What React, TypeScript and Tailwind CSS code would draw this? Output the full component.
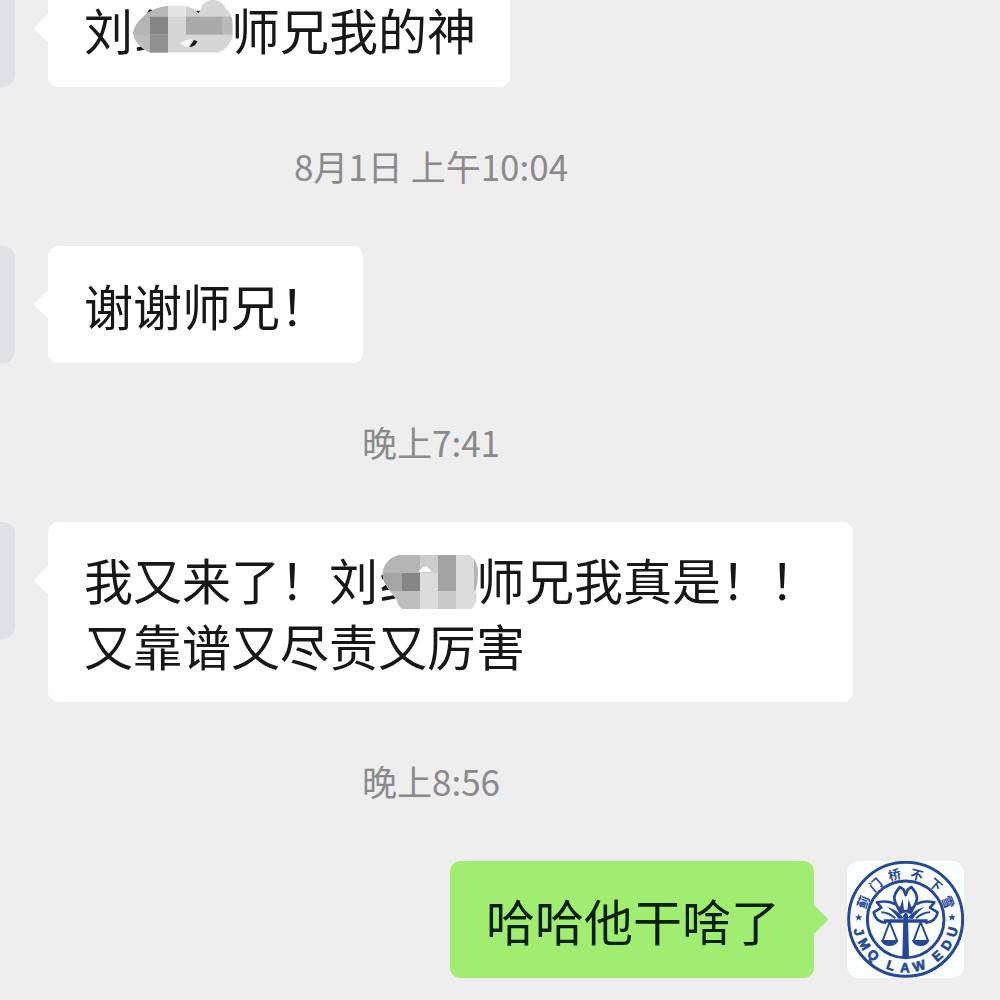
import React from "react";
import clsx from "clsx";

const ringTop = [
  { char: "蓟", angle: -68 },
  { char: "门", angle: -41 },
  { char: "桥", angle: -14 },
  { char: "不", angle: 14 },
  { char: "下", angle: 41 },
  { char: "雪", angle: 68 },
];

const ringBottom = [
  { char: "J", angle: 75 },
  { char: "M", angle: 59 },
  { char: "Q", angle: 42 },
  { char: "L", angle: 18 },
  { char: "A", angle: 1 },
  { char: "W", angle: -16 },
  { char: "E", angle: -41 },
  { char: "D", angle: -58 },
  { char: "U", angle: -75 },
];

const STAR = "M0 -11L3 -3L11 -3L5 2L7 10L0 5L-7 10L-5 2L-11 -3L-3 -3Z";

const LawLogo: React.FC = () => (
  <svg viewBox="51 36 351 351" className="size-full" role="img" aria-label="JMQ LAW EDU">
    <g fill="none" stroke="#27489a" strokeWidth="8" strokeLinejoin="round">
      <circle cx="227" cy="211" r="171" strokeWidth="9" />
      <circle cx="227" cy="211" r="115" strokeWidth="9" />
      {/* Blossom */}
      <path d="M213 192C204 176 192 162 193 144C195 132 203 122 210 114L221 122L227 138L233 122L244 114C251 122 259 132 261 144C262 162 250 176 241 192" />
      <path d="M196 166C180 156 160 156 141 160L154 176L131 190C134 208 146 219 168 222" />
      <path d="M258 166C274 156 294 156 313 160L300 176L323 190C320 208 308 219 286 222" />
      <path d="M154 190C168 190 182 196 196 208M300 190C286 190 272 196 258 208" strokeWidth="6" />
    </g>
    <g fill="#27489a">
      <path d="M194 164L210 174L218 150L222 182H232L236 150L244 174L260 164L244 196L227 190L210 196Z" />
      <path d="M170 174Q200 180 222 208L206 210Q192 188 170 174Z" />
      <path d="M284 174Q254 180 232 208L248 210Q262 188 284 174Z" />
    </g>
    {/* Scales */}
    <g fill="none" stroke="#27489a" strokeLinejoin="round">
      <path d="M162 216H293" strokeWidth="10" />
      <path d="M179 219L158 275M179 219L201 275M272 219L251 275M272 219L294 275" strokeWidth="6" />
    </g>
    <g fill="#27489a">
      <path d="M220 206Q217 199 227 190Q237 199 234 206L237 324H217Z" />
      <path d="M152 273H206Q199 291 179 291Q159 291 152 273Z" />
      <path d="M245 273H299Q292 291 272 291Q252 291 245 273Z" />
      <path d={STAR} transform="translate(86 205)" />
      <path d={STAR} transform="translate(366 205)" />
      <g textAnchor="middle" className="font-['Noto_Sans_CJK_SC',sans-serif] text-[38px] font-bold">
        {ringTop.map(({ char, angle }) => (
          <text key={char} x="227" y="88" transform={`rotate(${angle} 227 211)`}>
            {char}
          </text>
        ))}
      </g>
      <g
        textAnchor="middle"
        stroke="#27489a"
        strokeWidth="2"
        className="font-['Liberation_Sans_Narrow','Liberation_Sans',sans-serif] text-[40px] font-bold"
      >
        {ringBottom.map(({ char, angle }) => (
          <text key={char} x="227" y="370" transform={`rotate(${angle} 227 211)`}>
            {char}
          </text>
        ))}
      </g>
    </g>
  </svg>
);

// Pixelated smudges that hide part of a name
const SmudgeA: React.FC = () => (
  <svg viewBox="39 -14 294 198" className="absolute inset-0 size-full overflow-visible" aria-hidden="true">
    <clipPath id="smudge-a">
      <path d="M39 98Q42 72 68 50Q98 18 150 15H190Q218 20 240 38Q238 8 275 -4Q308 0 318 25Q338 38 338 75V110Q325 145 295 156H90Q45 135 39 98Z" />
    </clipPath>
    <g clipPath="url(#smudge-a)">
      <rect x="36" y="-10" width="310" height="170" fill="#d6d6d6" />
      <rect x="36" y="10" width="54" height="150" fill="#b4b4b4" />
      <rect x="36" y="102" width="54" height="60" fill="#bdbdbd" />
      <rect x="90" y="10" width="54" height="38" fill="#b8b8b8" />
      <rect x="90" y="48" width="54" height="54" fill="#858585" />
      <rect x="90" y="102" width="54" height="60" fill="#919191" />
      <rect x="144" y="10" width="54" height="38" fill="#e4e4e4" />
      <rect x="198" y="10" width="40" height="38" fill="#cdcdcd" />
      <rect x="198" y="48" width="108" height="54" fill="#aaaaaa" />
      <rect x="306" y="48" width="40" height="54" fill="#b9b9b9" />
    </g>
    <path d="M181 127Q198 115 216 117L207 139Q188 136 181 127Z" fill="#fff" />
    <path d="M222 118L232 122Q225 140 208 139Z" fill="#171717" />
    <path d="M228 31L241 30L236 37Z" fill="#171717" />
  </svg>
);

const SmudgeB: React.FC = () => (
  <svg viewBox="24 21 294 198" className="absolute inset-0 size-full overflow-visible" aria-hidden="true">
    <clipPath id="smudge-b">
      <path d="M85 48H300Q324 68 324 102Q324 130 317 156Q324 178 314 198L306 210H98Q84 202 80 182L52 145Q36 125 38 98Q46 60 85 48Z" />
    </clipPath>
    <g clipPath="url(#smudge-b)">
      <rect x="36" y="45" width="290" height="170" fill="#dcdcdc" />
      <rect x="36" y="45" width="114" height="57" fill="#b5b5b5" />
      <rect x="36" y="102" width="60" height="54" fill="#a5a5a5" />
      <rect x="96" y="102" width="54" height="54" fill="#858585" />
      <rect x="36" y="156" width="114" height="57" fill="#bdbdbd" />
      <rect x="150" y="45" width="54" height="57" fill="#cdcdcd" />
      <rect x="204" y="45" width="54" height="111" fill="#a3a3a3" />
      <rect x="204" y="156" width="54" height="57" fill="#c9c9c9" />
      <rect x="312" y="45" width="14" height="111" fill="#b5b5b5" />
    </g>
    <path d="M146 99Q165 66 185 99Z" fill="#fff" />
  </svg>
);

const HiddenName: React.FC<{ children: React.ReactNode }> = ({ children }) => (
  <span className="relative inline-block w-[98px] align-top">纟{children}</span>
);

type MessageProps = {
  mine?: boolean;
  children: React.ReactNode;
};

const Message: React.FC<MessageProps> = ({ mine, children }) => (
  <div className={clsx("flex items-start gap-[33px]", mine && "flex-row-reverse")}>
    <div
      className={clsx(
        "size-[117px] shrink-0 overflow-hidden rounded-xl",
        mine ? "bg-[#fafefe]" : "bg-[#e0e1e6]"
      )}
    >
      {mine && <LawLogo />}
    </div>
    <div
      className={clsx(
        "relative flex min-h-[117px] items-center rounded-[10px] py-6 pr-[34px] pl-9",
        mine ? "bg-[#a1ed71] text-[#062006]" : "bg-white text-[#171717]"
      )}
    >
      {/* Bubble tail */}
      <span
        className={clsx(
          "absolute top-12 size-[21px] rotate-45 rounded-[2px]",
          mine ? "-right-[10px] bg-[#a1ed71]" : "-left-[10px] bg-white"
        )}
      />
      <p className="relative text-[49px] leading-[66px] whitespace-nowrap">{children}</p>
    </div>
  </div>
);

const Timestamp: React.FC<{ children: React.ReactNode }> = ({ children }) => (
  <div className="flex h-[159px] items-center justify-center text-[35px] text-[#8a8a8a]">
    <time>{children}</time>
  </div>
);

const App: React.FC = () => {
  return (
    <main className="min-h-screen overflow-hidden bg-[#eeeeee] font-['Noto_Sans_CJK_SC',sans-serif]">
      {/* The conversation runs past the left and top edges */}
      <div className="-mt-[30px] -ml-[138px] px-9 pb-5">
        <Message>
          刘
          <HiddenName>
            <SmudgeA />
          </HiddenName>
          师兄我的神
        </Message>
        <Timestamp>8月1日 上午10:04</Timestamp>
        <Message>谢谢师兄！</Message>
        <Timestamp>晚上7:41</Timestamp>
        <Message>
          我又来了！刘
          <HiddenName>
            <SmudgeB />
          </HiddenName>
          师兄我真是！！
          <br />
          又靠谱又尽责又厉害
        </Message>
        <Timestamp>晚上8:56</Timestamp>
        <Message mine>哈哈他干啥了</Message>
      </div>
    </main>
  );
};

export default App;
